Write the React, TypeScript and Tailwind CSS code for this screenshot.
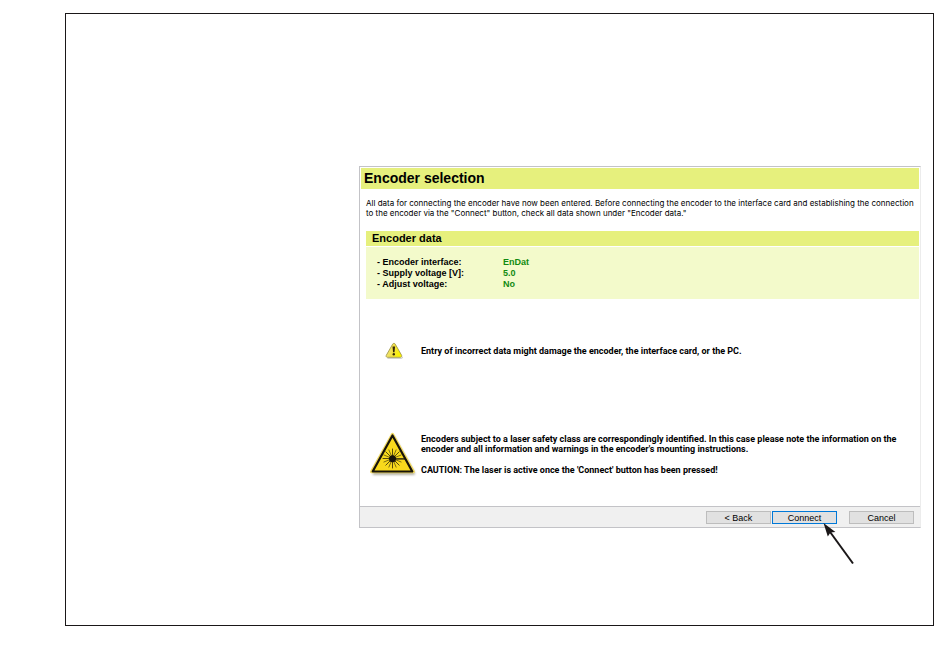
import React from "react";

const encoderData = [
  { label: "Encoder interface:", value: "EnDat" },
  { label: "Supply voltage [V]:", value: "5.0" },
  { label: "Adjust voltage:", value: "No" },
];

function WarningIcon() {
  return (
    <svg viewBox="0 0 18 17" className="h-[17px] w-[18px]" aria-hidden="true">
      <defs>
        <linearGradient id="warnFill" x1="0" y1="0" x2="1" y2="0.3">
          <stop offset="0" stopColor="#efe6a0" />
          <stop offset="0.5" stopColor="#f2e14a" />
          <stop offset="1" stopColor="#fbf200" />
        </linearGradient>
      </defs>
      <path d="M2.400 16.200h14.200c.8 0 1.200-.6.9-1.300" fill="none" stroke="#b9b9b0" strokeWidth="0.9" />
      <path
        d="M9 1.300c.5 0 .9.3 1.200.8l6.400 11.200c.5 1-.1 2-1.200 2H2.400c-1.100 0-1.600-1-1.100-2L7.700 2.100c.3-.5.7-.8 1.300-.8z"
        fill="url(#warnFill)"
        stroke="#a39a4c"
        strokeWidth="0.9"
      />
      <path d="M7.500 4.400h2.600l-.6 5.800H8.100z" fill="#33260a" />
      <circle cx="8.800" cy="12.200" r="1.200" fill="#33260a" />
    </svg>
  );
}

function LaserIcon() {
  return (
    <svg viewBox="0 0 48 46" className="h-[46px] w-12" aria-hidden="true">
      <defs>
        <filter id="laserShadow" x="-10%" y="-10%" width="125%" height="125%">
          <feGaussianBlur stdDeviation="1" />
        </filter>
      </defs>
      <path
        d="M25 4 46 41q.6 2-1.500 2H5q-2 0-1-2z"
        fill="#8d8a78"
        opacity="0.65"
        filter="url(#laserShadow)"
      />
      <path
        d="M23.500 2.200 44.500 39.800H2.500z"
        fill="#f6dc4a"
        stroke="#f0d860"
        strokeWidth="3"
        strokeLinejoin="round"
      />
      <path
        d="M23.500 3.500 43.300 39.500H3.700z"
        fill="#f8d91c"
        stroke="#17130a"
        strokeWidth="2.200"
        strokeLinejoin="round"
      />
      <g stroke="#2b240a" strokeWidth="0.8" strokeLinecap="round">
        <path d="M23.500 17v19M14 26.500h9M16.800 19.800l13.400 13.400M30.200 19.800 16.800 33.200" />
        <path d="M19.900 17.900l7.200 17.200M27.100 17.900l-7.200 17.200M14.900 23l17.200 7M14.900 30l17.200-7" strokeWidth="0.600" />
      </g>
      <path d="M23.500 26.900h13.500" stroke="#17130a" strokeWidth="1.300" />
      <circle cx="23.500" cy="26.700" r="3.500" fill="#17130a" />
    </svg>
  );
}

function PointerArrow() {
  return (
    <svg
      viewBox="0 0 32 43"
      className="pointer-events-none absolute left-[51px] top-[12px] h-[43px] w-8"
      aria-hidden="true"
    >
      <path d="M6 7.500 30 40.500" stroke="#1a1718" strokeWidth="2" />
      <path d="M0.500 0 12.400 9 7.500 9.500 4.800 13.600z" fill="#1a1718" />
    </svg>
  );
}

const buttonBase =
  "flex h-[13px] w-[65px] items-center justify-center border bg-[#e1e1e1] text-[9px] leading-[10px] text-black";

export default function App() {
  return (
    <div className="bg-white pb-[31px] pl-[65px] pr-4 pt-[13px] font-['Liberation_Sans',Arial,sans-serif] text-black">
      <main className="border border-[#1a1718] pb-[97px] pl-[293px] pr-3 pt-[152px]">
        <section className="border border-[#c3c3c7] border-r-[#ececec] bg-white">
          <div className="px-px pt-px">
            <h1 className="bg-[#e6f07d] pl-[3px] text-[14px] font-bold leading-[21px]">
              Encoder selection
            </h1>
          </div>

          <p className="pl-[6px] pr-px pt-[9px] font-[Inter,sans-serif] text-[8px] leading-[10px] text-black">
            All data for connecting the encoder have now been entered. Before connecting the encoder to
            the interface card and establishing the connection to the encoder via the "Connect" button,
            check all data shown under "Encoder data."
          </p>

          <div className="pl-[6px] pr-px pt-[13px]">
            <h2 className="bg-[#e6f07d] pl-[6px] text-[11px] font-bold leading-[15px]">
              Encoder data
            </h2>
            <dl className="mt-px bg-[#f3facb] pb-[9px] pl-[11px] pt-[10px] text-[9px] font-bold leading-[11px]">
              {encoderData.map((row) => (
                <div key={row.label} className="flex">
                  <dt className="w-[126px]">- {row.label}</dt>
                  <dd className="text-[#118a11]">{row.value}</dd>
                </div>
              ))}
            </dl>
          </div>

          <div className="mt-[43px] flex items-center pl-[25px] pr-2">
            <div className="w-9 shrink-0">
              <WarningIcon />
            </div>
            <p className="font-[Roboto,sans-serif] text-[9px] font-bold leading-[10px]">
              Entry of incorrect data might damage the encoder, the interface card, or the PC.
            </p>
          </div>

          <div className="mt-[73px] flex items-start pl-[9px] pr-2">
            <div className="w-[52px] shrink-0">
              <LaserIcon />
            </div>
            <div className="pt-[2px] font-[Roboto,sans-serif] text-[9px] font-bold leading-[10px]">
              <p>
                Encoders subject to a laser safety class are correspondingly identified. In this case
                please note the information on the encoder and all information and warnings in the
                encoder's mounting instructions.
              </p>
              <p className="mt-[11px]">
                CAUTION: The laser is active once the 'Connect' button has been pressed!
              </p>
            </div>
          </div>

          <footer className="mt-[28px] flex justify-end border-t border-[#c3c3c7] bg-[#f0f0f0] pb-[3px] pr-[6px] pt-1">
            <button type="button" className={`${buttonBase} border-[#bdbdbd]`}>
              &lt; Back
            </button>
            <div className="relative ml-px">
              <button type="button" className={`${buttonBase} border-[#0078d7]`}>
                Connect
              </button>
              <PointerArrow />
            </div>
            <button type="button" className={`${buttonBase} ml-3 border-[#bdbdbd]`}>
              Cancel
            </button>
          </footer>
        </section>
      </main>
    </div>
  );
}
